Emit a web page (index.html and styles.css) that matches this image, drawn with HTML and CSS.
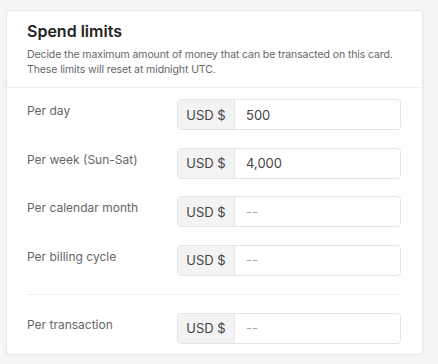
FILE: index.html
```html
<!DOCTYPE html>
<html lang="en">
<head>
    <meta charset="UTF-8">
    <meta name="viewport" content="width=device-width, initial-scale=1.0">
    <title>Spend limits</title>
    <link rel="stylesheet" href="styles.css">
</head>
<body>
    <div class="card">
        <div class="card-header">
            <h2>Spend limits</h2>
            <p>Decide the maximum amount of money that can be transacted on this card.<br>These limits will reset at midnight UTC.</p>
        </div>

        <div class="card-body">
            <div class="limit-row">
                <label for="perDay">Per day</label>
                <div class="money-input">
                    <span class="prefix">USD $</span>
                    <input type="text" id="perDay" value="500" placeholder="--">
                </div>
            </div>

            <div class="limit-row">
                <label for="perWeek">Per week (Sun-Sat)</label>
                <div class="money-input">
                    <span class="prefix">USD $</span>
                    <input type="text" id="perWeek" value="4,000" placeholder="--">
                </div>
            </div>

            <div class="limit-row">
                <label for="perMonth">Per calendar month</label>
                <div class="money-input">
                    <span class="prefix">USD $</span>
                    <input type="text" id="perMonth" placeholder="--">
                </div>
            </div>

            <div class="limit-row">
                <label for="perCycle">Per billing cycle</label>
                <div class="money-input">
                    <span class="prefix">USD $</span>
                    <input type="text" id="perCycle" placeholder="--">
                </div>
            </div>

            <hr class="divider">

            <div class="limit-row">
                <label for="perTransaction">Per transaction</label>
                <div class="money-input">
                    <span class="prefix">USD $</span>
                    <input type="text" id="perTransaction" placeholder="--">
                </div>
            </div>
        </div>
    </div>
</body>
</html>
```

FILE: styles.css
```css
body {
    margin: 0;
    padding: 10px 15px 0 6px;
    background-color: #f5f5f5;
    font-family: Inter, "Noto Sans", sans-serif;
}

.card {
    width: 417px;
    box-sizing: border-box;
    background-color: #fff;
    border: 1px solid #e8e8e8;
    border-radius: 4px;
    box-shadow: 0 1px 2px rgba(0, 0, 0, 0.08);
}

.card-header {
    padding: 10px 20px 10px;
    border-bottom: 1px solid #f0f0f0;
}

.card-header h2 {
    margin: 0 0 6px;
    font-size: 16px;
    font-weight: 600;
    line-height: 20px;
    color: #222;
}

.card-header p {
    margin: 0;
    font-size: 10.5px;
    line-height: 15px;
    letter-spacing: -0.1px;
    white-space: nowrap;
    color: #666;
}

.card-body {
    padding: 11px 20px 10px;
    display: flex;
    flex-direction: column;
    gap: 17.5px;
}

.limit-row {
    display: grid;
    grid-template-columns: 150px 224px;
    align-items: start;
}

.limit-row label {
    padding-top: 3px;
    font-size: 12px;
    line-height: 18px;
    color: #666;
}

.money-input {
    display: flex;
    height: 31px;
    box-sizing: border-box;
    border: 1px solid #e4e4e4;
    border-radius: 4px;
    overflow: hidden;
}

.prefix {
    width: 56px;
    display: flex;
    align-items: center;
    justify-content: center;
    background-color: #f3f3f3;
    border-right: 1px solid #e4e4e4;
    font-size: 13px;
    color: #444;
}

.money-input input {
    flex: 1;
    min-width: 0;
    border: none;
    outline: none;
    padding: 0 11px;
    font-family: inherit;
    font-size: 13px;
    color: #444;
}

.money-input input::placeholder {
    color: #aaa;
}

.divider {
    margin: 1px 0 0;
    border: none;
    border-top: 1px solid #f0f0f0;
}
```
